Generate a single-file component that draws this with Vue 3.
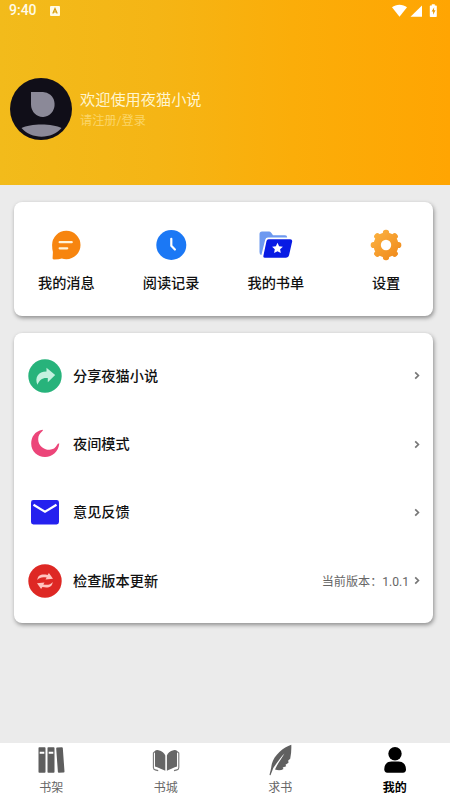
<script setup>
const shortcuts = [
  { id: 'message', label: '我的消息' },
  { id: 'history', label: '阅读记录' },
  { id: 'booklist', label: '我的书单' },
  { id: 'settings', label: '设置' },
]
const rows = [
  { id: 'share', label: '分享夜猫小说' },
  { id: 'night', label: '夜间模式' },
  { id: 'feedback', label: '意见反馈' },
  { id: 'update', label: '检查版本更新', note: '当前版本：1.0.1' },
]
const tabs = [
  { id: 'shelf', label: '书架' },
  { id: 'store', label: '书城' },
  { id: 'request', label: '求书' },
  { id: 'mine', label: '我的', active: true },
]
const teeth = [0, 45, 90, 135, 180, 225, 270, 315]
</script>

<template>
  <div class="page">
    <header class="header">
      <div class="status">
        <span class="time">9:40</span>
        <svg class="ime" viewBox="0 0 10 10">
          <rect width="10" height="10" rx="1" fill="#fffbe8" />
          <path d="M2.8 7.4 5 2.5l2.2 4.9M3.7 6h2.6" fill="none" stroke="#d79b08" stroke-width="1.2" />
        </svg>
        <svg class="signals" viewBox="0 0 46 14">
          <path d="M0 3.2C4-.2 11-.2 15 3.2L7.500 12.800z" fill="#fff" />
          <path d="M18.500 12.800 30 1.500v11.300z" fill="#fff" />
          <path d="M39.800 1.500V.2h3v1.300h1.200q.8 0 .8.800v9.900q0 .8-.8.800h-5.400q-.8 0-.8-.8V2.300q0-.8.800-.8z" fill="#fff" />
          <path d="M42.200 3.200 39.600 7.400h1.500v3.300L43.500 6.300H42z" fill="#e99a08" />
        </svg>
      </div>
      <div class="profile">
        <svg class="avatar" viewBox="0 0 62 62">
          <circle cx="31" cy="31" r="31" fill="#100e18" />
          <path d="M21 14h10.500A11.800 12.500 0 1 1 21 26.500z" fill="#8b8998" />
          <path d="M11.500 50C20 45.300 43 45.300 51.500 50 42 61.500 21 61.500 11.500 50z" fill="#8b8998" />
        </svg>
        <div class="names">
          <div class="welcome">欢迎使用夜猫小说</div>
          <div class="login">请注册/登录</div>
        </div>
      </div>
    </header>

    <main class="content">
      <section class="card shortcuts">
        <div v-for="s in shortcuts" :key="s.id" class="shortcut" :class="s.id">
          <svg v-if="s.id === 'message'" class="icon" viewBox="0 0 34 34">
            <path d="M17.300 2.800a14.200 14.200 0 1 1 0 28.400q-2.500 0-4.500-.8-2.500 1-8 1-1.500 0-1.200-1.500L3.900 24Q3.100 20.500 3.100 17A14.200 14.200 0 0 1 17.300 2.800z" fill="#f7850f" />
            <path d="M10.700 14.200h12M10.700 20.300h7.500" stroke="#fff3d8" stroke-width="2.300" stroke-linecap="round" />
          </svg>
          <svg v-else-if="s.id === 'history'" class="icon" viewBox="0 0 34 34">
            <circle cx="17.300" cy="17" r="15" fill="#1b78f5" />
            <path d="M17.300 10.800v7l3.600 3.700" fill="none" stroke="#fff" stroke-width="2.200" stroke-linecap="round" stroke-linejoin="round" />
          </svg>
          <svg v-else-if="s.id === 'booklist'" class="icon" viewBox="0 0 34 34">
            <path d="M.5 6q0-2.500 2.500-2.500h7q1.300 0 2.200 1.300L14 7.300h12q2.200 0 2.200 2.200H9q-2.200 0-2.800 2.300L2.400 27H2Q.5 26.500.5 24z" fill="#6d99f0" />
            <path d="M9.500 11.300h21.700q2.500 0 1.900 2.500l-3 13.200q-.7 2.800-3.400 2.800H6q-2 0-1.600-2L7.500 13q.4-1.700 2-1.700z" fill="#081be4" />
            <path d="m18.500 14.700 1.600 3.500 3.800.5-2.800 2.600.7 3.800-3.300-1.900-3.400 1.900.7-3.800-2.700-2.600 3.800-.5z" fill="#fff" />
          </svg>
          <svg v-else class="icon" viewBox="0 0 34 34">
            <defs>
              <linearGradient id="gear" gradientUnits="userSpaceOnUse" x1="5" y1="4" x2="29" y2="30">
                <stop offset="0" stop-color="#fbb140" />
                <stop offset="1" stop-color="#f08a1b" />
              </linearGradient>
              <mask id="gear-shape">
                <circle cx="17" cy="17" r="12.500" fill="#fff" />
                <rect v-for="t in teeth" :key="t" x="13.900" y="1.700" width="6.200" height="8" rx="2.800" fill="#fff" :transform="`rotate(${t} 17 17)`" />
                <circle cx="17" cy="17" r="5.200" fill="#000" />
              </mask>
            </defs>
            <rect width="34" height="34" fill="url(#gear)" mask="url(#gear-shape)" />
          </svg>
          <span class="label">{{ s.label }}</span>
        </div>
      </section>

      <section class="card menu">
        <div v-for="r in rows" :key="r.id" class="row">
          <svg v-if="r.id === 'share'" class="row-icon" viewBox="0 0 34 34">
            <circle cx="17" cy="17" r="16.700" fill="#27b37b" />
            <path d="M18.500 8.700 27.200 16l-7.400 7.300v-4.200c-5.200-.7-8.500 1.900-10.300 6.600-3.200-6.900.7-13.200 9-13.200z" fill="#c4f1df" />
          </svg>
          <svg v-else-if="r.id === 'night'" class="row-icon" viewBox="0 0 34 34">
            <path d="M14.500 2.800C6.500 4.200 3.200 10.500 3.200 16.500 3.200 24.500 9.500 30 17 30c7.500 0 13.500-5.500 14.300-13.400-.9-.4-1.600.2-2 1-1.800 3.400-4.300 5.200-7.800 5.200-6.300 0-11.300-4.600-11.300-10.600 0-3.200 1.500-5.800 4-7.900.8-.7 1-1.300.3-1.500z" fill="#ec4579" />
          </svg>
          <svg v-else-if="r.id === 'feedback'" class="row-icon" viewBox="0 0 34 34">
            <rect x="3" y="5" width="28" height="24.500" rx="2.400" fill="#2521ef" />
            <path d="m5.500 9.800 11.500 7 11.500-7" fill="none" stroke="#fff" stroke-width="2.200" />
          </svg>
          <svg v-else class="row-icon" viewBox="0 0 34 34">
            <circle cx="17" cy="17" r="16.700" fill="#de2824" />
            <g fill="#ffc5c0">
              <path d="M9.300 16C9.700 11 13.700 9.700 19.600 11l1.300-1.900 4.100 5.700-7.500.8 1.200-2.100c-4.200-.8-7.300-.2-9.400 2.500z" />
              <path d="M24.700 18C24.300 23 20.300 24.300 14.400 23l-1.300 1.900L9 19.200l7.500-.8-1.200 2.100c4.200.8 7.300.2 9.400-2.500z" />
            </g>
          </svg>
          <span class="row-label">{{ r.label }}</span>
          <span v-if="r.note" class="note">{{ r.note }}</span>
          <svg class="chevron" viewBox="0 0 6 9"><path d="m1.200 1.300 3.200 3.200-3.200 3.200" fill="none" stroke="#777" stroke-width="1.700" /></svg>
        </div>
      </section>
    </main>

    <nav class="tabs">
      <div v-for="t in tabs" :key="t.id" class="tab" :class="{ active: t.active }">
        <svg v-if="t.id === 'shelf'" class="tab-icon" viewBox="0 0 32 32">
          <path d="M4.300 3.300h5.400q.8 0 .8.800v23.800q0 .8-.8.800H4.300q-.8 0-.8-.8V4.100q0-.8.800-.8zm9 0h5.400q.8 0 .8.800v23.800q0 .8-.8.800h-5.400q-.8 0-.8-.8V4.100q0-.8.800-.8zM22 3.500l4.900-.3q.8 0 .9.800l1.700 23.600q0 .8-.7.900l-5 .3q-.8 0-.9-.8L21.200 4.400q0-.8.800-.9z" fill="#5e5e5e" />
          <path d="M4.700 8.700h4.600M13.700 8.700h4.600" stroke="#fff" stroke-width="2" />
        </svg>
        <svg v-else-if="t.id === 'store'" class="tab-icon" viewBox="0 0 32 32">
          <path d="M5 6.800Q6.500 5.700 8.500 6.300C12 7.200 14.300 9 15.300 11.500v15.300C12.500 25.500 9 24 5 22.500zM27 6.800Q25.500 5.700 23.500 6.300C20 7.200 17.700 9 16.900 11.500v15.300C19.500 25.500 23 24 27 22.500z" fill="#666" />
          <path d="M5 7.500 3.400 9v14.500q0 2 1.800 2.400l3 .7M27 7.500 28.800 9v14.500q0 2-1.800 2.400l-3 .7" fill="none" stroke="#777" stroke-width="1.100" />
        </svg>
        <svg v-else-if="t.id === 'request'" class="tab-icon" viewBox="0 0 32 32">
          <path d="M27.300.8C19 3.500 9 12 7.500 21.500 7.200 25 6 28 5.500 31l1 .3 2.800-7.300C13 18.500 16.500 13.500 20.500 9.500 17.500 14.500 13.500 19.500 11 25.500c3.500 1.300 6 1 8.500-.5l-.8-1.500 3.500-1.200-.7-1.600 3-2-.3-2.200 2-1.800c1-4.700 1.300-9.300 1.100-13.900z" fill="#606060" />
        </svg>
        <svg v-else class="tab-icon" viewBox="0 0 32 32">
          <circle cx="16" cy="9.800" r="6.700" fill="#000" />
          <path d="M5.300 25.500C5.300 19.500 8.800 17.500 12.500 17.500h7c4 0 7.500 2.500 7.500 8 0 2-1 3.200-3 3.200H8.300c-2 0-3-1.200-3-3.200z" fill="#000" />
        </svg>
        <span>{{ t.label }}</span>
      </div>
    </nav>
  </div>
</template>

<style>
body {
  margin: 0;
  overflow: hidden;
}
</style>

<style scoped>
.page {
  width: 450px;
  height: 800px;
  overflow: hidden;
  display: flex;
  flex-direction: column;
  background: #ebebeb;
  color: #111;
  font-family: Roboto, "Noto Sans CJK SC", sans-serif;
}
.header {
  box-sizing: border-box;
  height: 185px;
  flex: none;
  background: linear-gradient(90deg, #f2bb1b 0%, #f5b515 35%, #fbad09 65%, #ffa502 100%);
}
.status {
  height: 21px;
  padding: 0 12px 0 9px;
  display: flex;
  align-items: center;
  color: #fffbe8;
}
.time {
  width: 41px;
  font-size: 14px;
  line-height: 21px;
  font-weight: 500;
}
.ime {
  width: 10px;
  height: 10px;
}
.signals {
  width: 46px;
  height: 14px;
  margin-left: auto;
}
.profile {
  display: flex;
  align-items: center;
  padding: 57px 0 0 10px;
}
.avatar {
  width: 62px;
  height: 62px;
}
.names {
  margin-left: 8px;
  padding-top: 2px;
}
.welcome {
  font-size: 15.200px;
  line-height: 22px;
  color: #fff5cf;
}
.login {
  font-size: 12.200px;
  line-height: 20px;
  color: #fbd568;
}
.content {
  flex: 1;
  display: flex;
  flex-direction: column;
  gap: 17px;
  padding: 17px 17px 0 14px;
}
.card {
  box-sizing: border-box;
  background: #fff;
  border-radius: 8px;
  box-shadow: 1px 2px 4px rgba(0, 0, 0, 0.4);
}
.shortcuts {
  height: 114px;
  display: grid;
  grid-template-columns: repeat(4, 1fr);
}
.shortcut {
  display: flex;
  flex-direction: column;
  align-items: center;
  padding-top: 26px;
}
.shortcut.settings {
  padding-left: 11px;
}
.icon {
  width: 34px;
  height: 34px;
}
.label {
  margin-top: 11px;
}
.label,
.row-label {
  font-size: 14.200px;
  line-height: 20px;
  font-weight: 500;
}
.menu {
  height: 290px;
  padding: 8.500px 13px 0 13.600px;
}
.row {
  height: 68.400px;
  display: flex;
  align-items: center;
}
.row-icon {
  width: 34px;
  height: 34px;
  margin-right: 11.400px;
}
.note {
  margin-left: auto;
  margin-top: -1px;
  font-size: 12.100px;
  color: #666;
}
.chevron {
  width: 6px;
  height: 9px;
  margin-left: auto;
}
.note + .chevron {
  margin-left: 5px;
}
.tabs {
  flex: none;
  height: 57px;
  margin: 0 -2px 0 -6px;
  display: grid;
  grid-template-columns: repeat(4, 1fr);
  background: #fff;
}
.tab {
  display: flex;
  flex-direction: column;
  align-items: center;
  font-size: 12px;
  line-height: 18px;
  color: #666;
}
.tab.active {
  color: #000;
  font-weight: 700;
}
.tab-icon {
  width: 32px;
  height: 32px;
  margin-top: 1px;
  margin-bottom: 3px;
}
</style>
